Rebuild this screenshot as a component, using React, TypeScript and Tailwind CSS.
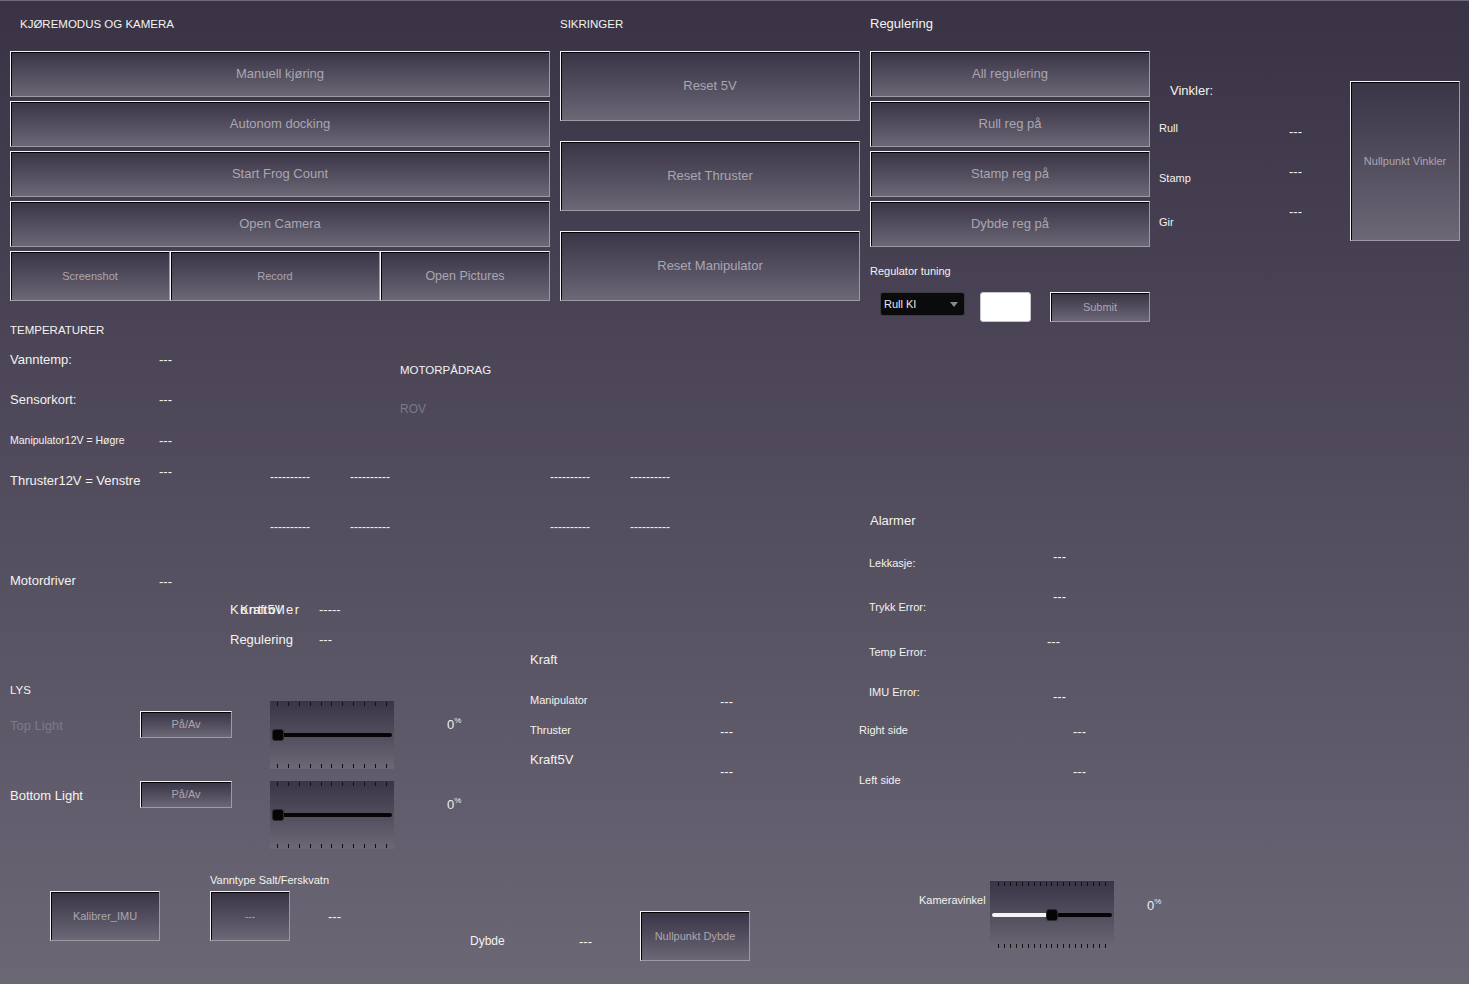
import React from "react";

type BtnProps = { className?: string; children?: React.ReactNode };

const Btn = ({ className = "", children }: BtnProps) => (
  <div
    className={`flex shrink-0 items-center justify-center whitespace-nowrap border border-t-[#f4f4f4] border-l-[#f4f4f4] border-b-[#9d9aa3] border-r-[#9d9aa3] bg-linear-to-b from-[#3a3446] to-[#6c6876] text-[#aaa6af] shadow-[inset_1px_1px_0_#000] ${className}`}
  >
    {children}
  </div>
);

const Ticks = ({ n, cls }: { n: number; cls: string }) => (
  <div className={`flex h-[4px] justify-between ${cls}`}>
    {Array.from({ length: n }).map((_, i) => (
      <div key={i} className="h-[4px] w-[1px] bg-[#111]" />
    ))}
  </div>
);

const Slider = ({ ticks, fill, tickCls }: { ticks: number; fill: number; tickCls: string }) => (
  <div className="flex h-[68px] w-[124px] shrink-0 flex-col justify-between bg-linear-to-b from-[#3a3446] to-[#6c6876] py-[1px]">
    <Ticks n={ticks} cls={tickCls} />
    <div className="flex h-[12px] items-center px-[2px]">
      {fill > 0 && <div className="h-[4px] rounded-l-full bg-[#f4f4f4]" style={{ width: fill }} />}
      <div className="h-[12px] w-[12px] shrink-0 rounded-[3px] border border-[#2b2b2b] bg-[#050505]" />
      <div className="h-[4px] flex-1 rounded-r-full bg-[#050505]" />
    </div>
    <Ticks n={ticks} cls={tickCls} />
  </div>
);

const Pct = ({ cls }: { cls: string }) => (
  <div className={`flex items-start text-[#eeeeee] ${cls}`}>
    <span className="text-[13px] leading-[16px]">0</span>
    <span className="text-[8px] leading-[8px]">%</span>
  </div>
);

const L = "h-[16px] leading-[16px] whitespace-nowrap shrink-0";

export default function App() {
  return (
    <div className="h-[984px] w-[1469px] overflow-hidden bg-linear-to-b from-[#3a3346] to-[#6b6775] font-['Liberation_Sans',Arial,sans-serif] text-[#f4f2ee] shadow-[inset_0_1px_0_#6f6a7a]">
      {/* TOP */}
      <div className="flex h-[320px] items-start">
        <div className="ml-[10px] flex w-[540px] flex-col">
          <div className="h-[51px] shrink-0 pl-[10px] pt-[16px] text-[11.5px] leading-[16px]">KJØREMODUS OG KAMERA</div>
          <div className="flex flex-col gap-[4px]">
            <Btn className="h-[46px] text-[13px]">Manuell kjøring</Btn>
            <Btn className="h-[46px] text-[13px]">Autonom docking</Btn>
            <Btn className="h-[46px] text-[13px]">Start Frog Count</Btn>
            <Btn className="h-[46px] text-[13px]">Open Camera</Btn>
            <div className="flex h-[50px]">
              <Btn className="h-[50px] w-[160px] text-[11px]">Screenshot</Btn>
              <Btn className="h-[50px] w-[210px] text-[11px]">Record</Btn>
              <Btn className="h-[50px] w-[170px] text-[12.5px]">Open Pictures</Btn>
            </div>
          </div>
        </div>

        <div className="ml-[10px] flex w-[300px] flex-col">
          <div className="h-[51px] shrink-0 pt-[16px] text-[11.5px] leading-[16px]">SIKRINGER</div>
          <div className="flex flex-col gap-[20px]">
            <Btn className="h-[70px] text-[13px]">Reset 5V</Btn>
            <Btn className="h-[70px] text-[13px]">Reset Thruster</Btn>
            <Btn className="h-[70px] text-[13px]">Reset Manipulator</Btn>
          </div>
        </div>

        <div className="ml-[10px] flex w-[280px] flex-col">
          <div className="h-[51px] shrink-0 pt-[16px] text-[13px] leading-[16px]">Regulering</div>
          <div className="flex flex-col gap-[4px]">
            <Btn className="h-[46px] text-[13px]">All regulering</Btn>
            <Btn className="h-[46px] text-[13px]">Rull reg på</Btn>
            <Btn className="h-[46px] text-[13px]">Stamp reg på</Btn>
            <Btn className="h-[46px] text-[13px]">Dybde reg på</Btn>
          </div>
          <div className={`${L} mt-[16px] text-[11px]`}>Regulator tuning</div>
          <div className="mt-[13px] flex shrink-0 items-start">
            <div className="ml-[10px] flex h-[24px] w-[85px] items-center justify-between rounded-[3px] border border-[#3c3c40] bg-[#0b0b0d] pl-[3px] pr-[6px] text-[11px] text-[#e8e8e8]">
              <span>Rull KI</span>
              <svg width="8" height="5" viewBox="0 0 8 5">
                <path d="M0 0 L8 0 L4 5 Z" fill="#8a8a8e" />
              </svg>
            </div>
            <div className="ml-[15px] h-[30px] w-[51px] rounded-[3px] border border-[#c8c8c8] bg-white" />
            <Btn className="ml-[19px] h-[30px] w-[100px] text-[11px]">Submit</Btn>
          </div>
        </div>

        <div className="ml-[9px] flex w-[191px] flex-col">
          <div className={`${L} mt-[83px] pl-[11px] text-[13px]`}>Vinkler:</div>
          <div className="mt-[21px] flex items-start">
            <div className={`${L} w-[130px] text-[11px]`}>Rull</div>
            <div className={`${L} mt-[4px] text-[13px]`}>---</div>
          </div>
          <div className="mt-[24px] flex items-start">
            <div className={`${L} mt-[6px] w-[130px] text-[11px]`}>Stamp</div>
            <div className={`${L} text-[13px]`}>---</div>
          </div>
          <div className="mt-[18px] flex items-start">
            <div className={`${L} mt-[10px] w-[130px] text-[11px]`}>Gir</div>
            <div className={`${L} text-[13px]`}>---</div>
          </div>
        </div>

        <Btn className="mt-[81px] h-[160px] w-[110px] text-[11px]">Nullpunkt Vinkler</Btn>
      </div>

      {/* LOWER */}
      <div className="flex h-[664px]">
        {/* left area */}
        <div className="flex w-[859px] shrink-0 flex-col">
          {/* band 1 */}
          <div className="flex h-[275px] shrink-0 items-start">
            <div className="ml-[10px] flex w-[260px] flex-col">
              <div className={`${L} mt-[2px] text-[11.5px]`}>TEMPERATURER</div>
              <div className="mt-[14px] flex items-start">
                <div className={`${L} w-[149px] text-[13px]`}>Vanntemp:</div>
                <div className={`${L} text-[13px]`}>---</div>
              </div>
              <div className="mt-[24px] flex items-start">
                <div className={`${L} w-[149px] text-[13px]`}>Sensorkort:</div>
                <div className={`${L} text-[13px]`}>---</div>
              </div>
              <div className="mt-[24px] flex items-start">
                <div className={`${L} w-[149px] text-[10.5px]`}>Manipulator12V = Høgre</div>
                <div className={`${L} mt-[1px] text-[13px]`}>---</div>
              </div>
              <div className="mt-[15px] flex items-start">
                <div className={`${L} mt-[9px] w-[149px] text-[13px]`}>Thruster12V = Venstre</div>
                <div className={`${L} text-[13px]`}>---</div>
              </div>
              <div className="mt-[84px] flex items-start">
                <div className={`${L} w-[149px] text-[13px]`}>Motordriver</div>
                <div className={`${L} mt-[1px] text-[13px]`}>---</div>
              </div>
            </div>
            <div className="flex w-[400px] flex-col">
              <div className={`${L} mt-[42px] pl-[130px] text-[11.5px]`}>MOTORPÅDRAG</div>
              <div className={`${L} mt-[23px] pl-[130px] text-[12px] text-[#7c798a]`}>ROV</div>
              <div className="mt-[52px] flex text-[12px]">
                <div className={`${L} w-[80px]`}>----------</div>
                <div className={`${L} w-[200px]`}>----------</div>
                <div className={`${L} w-[80px]`}>----------</div>
                <div className={L}>----------</div>
              </div>
              <div className="mt-[34px] flex text-[12px]">
                <div className={`${L} w-[80px]`}>----------</div>
                <div className={`${L} w-[200px]`}>----------</div>
                <div className={`${L} w-[80px]`}>----------</div>
                <div className={L}>----------</div>
              </div>
            </div>
          </div>

          {/* band 2 */}
          <div className="flex h-[55px] shrink-0 flex-col pl-[230px]">
            <div className="mt-[7px] flex items-start">
              <div className={`${L} relative w-[89px] text-[13px]`}>
                <span className="tracking-[1.5px]">Kontroller</span>
                <span className="absolute left-[10px] top-0">Kraft5V</span>
              </div>
              <div className={`${L} text-[13px]`}>-----</div>
            </div>
            <div className="mt-[14px] flex items-start">
              <div className={`${L} w-[89px] text-[13px]`}>Regulering</div>
              <div className={`${L} text-[13px]`}>---</div>
            </div>
          </div>

          {/* band 3 */}
          <div className="flex h-[210px] shrink-0 items-start">
            <div className="ml-[10px] flex w-[510px] flex-col">
              <div className={`${L} mt-[32px] text-[11.5px]`}>LYS</div>
              <div className="mt-[3px] flex items-start">
                <div className={`${L} mt-[17px] w-[130px] text-[13px] text-[#7c798a]`}>Top Light</div>
                <Btn className="mt-[10px] h-[27px] w-[92px] text-[11px]">På/Av</Btn>
                <div className="ml-[38px]">
                  <Slider ticks={11} fill={0} tickCls="px-[7px]" />
                </div>
                <Pct cls="ml-[53px] mt-[16px]" />
              </div>
              <div className="mt-[12px] flex items-start">
                <div className={`${L} mt-[7px] w-[130px] text-[13px]`}>Bottom Light</div>
                <Btn className="h-[27px] w-[92px] text-[11px]">På/Av</Btn>
                <div className="ml-[38px]">
                  <Slider ticks={11} fill={0} tickCls="px-[7px]" />
                </div>
                <Pct cls="ml-[53px] mt-[16px]" />
              </div>
            </div>
            <div className="ml-[10px] flex w-[260px] flex-col">
              <div className={`${L} mt-[2px] text-[13px]`}>Kraft</div>
              <div className="mt-[24px] flex items-start">
                <div className={`${L} w-[190px] text-[11px]`}>Manipulator</div>
                <div className={`${L} mt-[2px] text-[13px]`}>---</div>
              </div>
              <div className="mt-[12px] flex items-start">
                <div className={`${L} w-[190px] text-[11px]`}>Thruster</div>
                <div className={`${L} mt-[2px] text-[13px]`}>---</div>
              </div>
              <div className="mt-[12px] flex items-start">
                <div className={`${L} w-[190px] text-[13px]`}>Kraft5V</div>
                <div className={`${L} mt-[12px] text-[13px]`}>---</div>
              </div>
            </div>
          </div>

          {/* band 4 */}
          <div className="flex flex-1 items-start">
            <Btn className="ml-[50px] mt-[31px] h-[50px] w-[110px] text-[11px]">Kalibrer_IMU</Btn>
            <div className="ml-[50px] flex w-[80px] shrink-0 flex-col">
              <div className={`${L} mt-[12px] text-[11px]`}>Vanntype Salt/Ferskvatn</div>
              <Btn className="mt-[3px] h-[50px] w-[80px] text-[10px]">---</Btn>
            </div>
            <div className={`${L} ml-[38px] mt-[49px] w-[142px] text-[13px]`}>---</div>
            <div className={`${L} mt-[73px] w-[109px] text-[12px]`}>Dybde</div>
            <div className={`${L} mt-[74px] w-[61px] text-[13px]`}>---</div>
            <Btn className="mt-[51px] h-[50px] w-[110px] text-[11px]">Nullpunkt Dybde</Btn>
          </div>
        </div>

        {/* right area */}
        <div className="flex flex-1 flex-col">
          <div className={`${L} mt-[193px] pl-[11px] text-[13px]`}>Alarmer</div>
          <div className="mt-[20px] flex items-start pl-[10px]">
            <div className={`${L} mt-[6px] w-[184px] text-[11px]`}>Lekkasje:</div>
            <div className={`${L} text-[13px]`}>---</div>
          </div>
          <div className="mt-[18px] flex items-start pl-[10px]">
            <div className={`${L} mt-[10px] w-[184px] text-[11px]`}>Trykk Error:</div>
            <div className={`${L} text-[13px]`}>---</div>
          </div>
          <div className="mt-[19px] flex items-start pl-[10px]">
            <div className={`${L} mt-[10px] w-[178px] text-[11px]`}>Temp Error:</div>
            <div className={`${L} text-[13px]`}>---</div>
          </div>
          <div className="mt-[24px] flex items-start pl-[10px]">
            <div className={`${L} w-[184px] text-[11px]`}>IMU Error:</div>
            <div className={`${L} mt-[5px] text-[13px]`}>---</div>
          </div>
          <div className="mt-[17px] flex items-start">
            <div className={`${L} w-[214px] text-[11px]`}>Right side</div>
            <div className={`${L} mt-[2px] text-[13px]`}>---</div>
          </div>
          <div className="mt-[24px] flex items-start">
            <div className={`${L} mt-[8px] w-[214px] text-[11px]`}>Left side</div>
            <div className={`${L} text-[13px]`}>---</div>
          </div>
          <div className="mt-[93px] flex items-start">
            <div className={`${L} ml-[60px] mt-[11px] w-[71px] text-[11px]`}>Kameravinkel</div>
            <Slider ticks={19} fill={54} tickCls="px-[8px]" />
            <Pct cls="ml-[33px] mt-[17px]" />
          </div>
        </div>
      </div>
    </div>
  );
}
